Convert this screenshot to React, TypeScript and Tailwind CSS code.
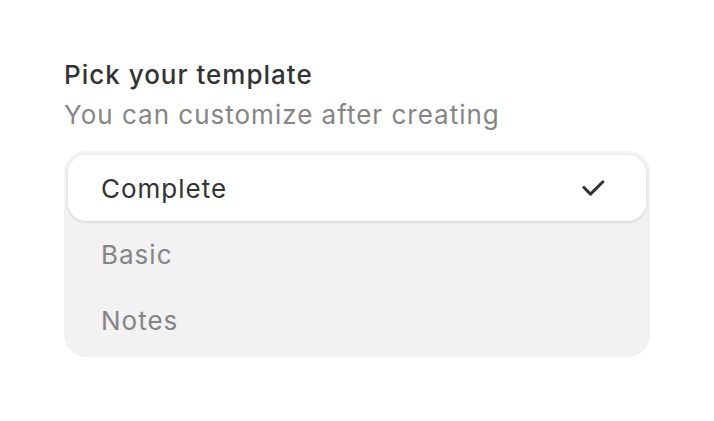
import React, { useState } from 'react';

const templates = ['Complete', 'Basic', 'Notes'];

export default function App() {
  const [selected, setSelected] = useState('Complete');

  return (
    <div
      className="min-h-screen bg-white pt-[58px] pl-16 pr-16 tracking-[1px]"
      style={{ fontFamily: 'Inter, "Noto Sans", sans-serif' }}
    >
      <h2 className="text-[26px] leading-[34px] font-medium text-[#333333]">Pick your template</h2>
      <p className="mt-[6px] text-[26px] leading-[34px] text-[#858585]">You can customize after creating</p>

      <div className="mt-[19px] w-[586px] rounded-[22px] bg-[#f2f2f2] p-1">
        {templates.map(name => {
          const active = name === selected;
          return (
            <button
              key={name}
              type="button"
              onClick={() => setSelected(name)}
              className={`flex h-[66px] w-full items-center justify-between rounded-[18px] pl-[33px] pr-[40px] text-left text-[26px] ${
                active
                  ? 'bg-white text-[#333333] shadow-[0_1px_3px_rgba(0,0,0,0.15)]'
                  : 'text-[#858585]'
              }`}
            >
              <span>{name}</span>
              {active && (
                <svg width="24" height="24" viewBox="0 0 24 24" fill="none">
                  <path
                    d="M2 11l7 7L22 5"
                    stroke="#333333"
                    strokeWidth={3.2}
                    strokeLinecap="round"
                    strokeLinejoin="round"
                    transform="translate(0 1) scale(0.95)"
                  />
                </svg>
              )}
            </button>
          );
        })}
      </div>
    </div>
  );
}
